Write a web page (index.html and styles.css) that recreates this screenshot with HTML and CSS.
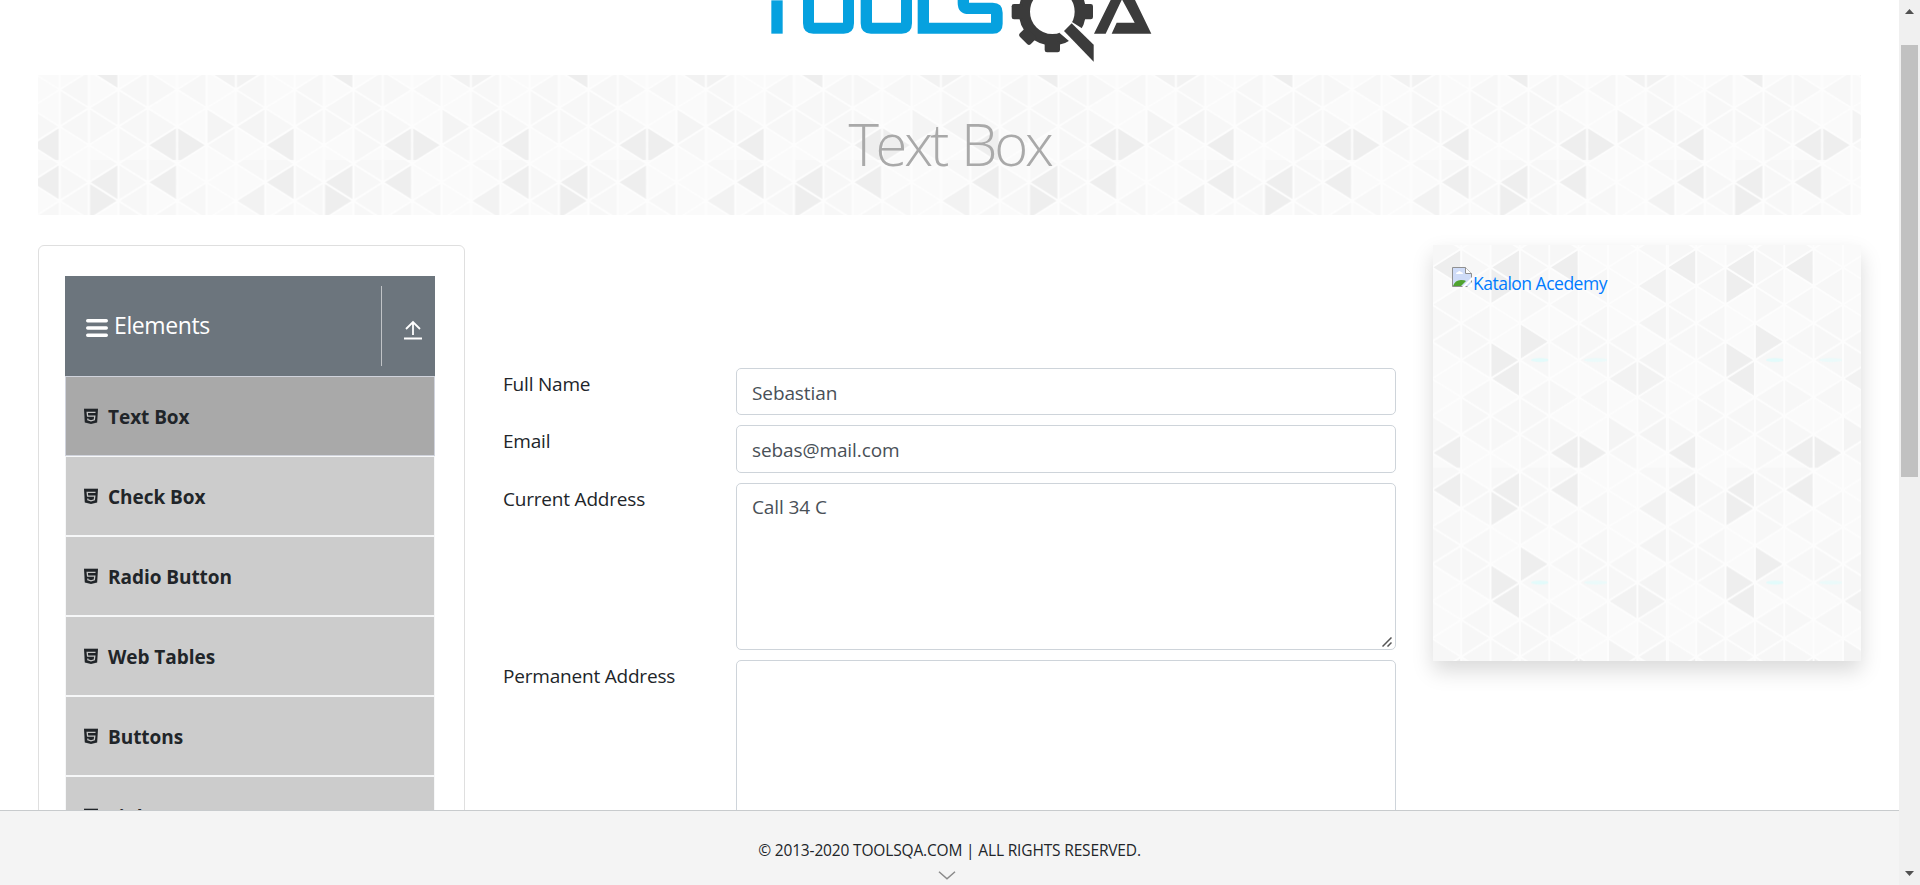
FILE: index.html
```html
<!DOCTYPE html>
<html lang="en">
<head>
<meta charset="utf-8">
<title>ToolsQA</title>
<link rel="stylesheet" href="styles.css">
</head>
<body>
<svg class="defs" width="0" height="0" aria-hidden="true">
  <defs>
    <polygon id="l" points="0,0 29.4,-18.5 29.4,18.5"/>
    <polygon id="r" points="29.4,0 0,-18.5 0,18.5"/>
    <g id="tile">
      <rect width="235" height="222.6" fill="#fafafa"/>
      <g fill="#f7f7f7">
        <use href="#r" x="-1.2" y="189.3"/><use href="#l" x="28.2" y="189.3"/><use href="#r" x="57.5" y="189.3"/><use href="#l" x="86.9" y="189.3"/><use href="#r" x="116.3" y="189.3"/>
        <use href="#l" x="28.2" y="115.1"/><use href="#r" x="57.5" y="115.1"/><use href="#l" x="86.9" y="115.1"/><use href="#l" x="145.6" y="115.1"/><use href="#r" x="175" y="115.1"/>
        <use href="#l" x="28.2" y="152.2"/><use href="#l" x="86.9" y="152.2"/><use href="#r" x="116.3" y="152.2"/><use href="#l" x="145.6" y="152.2"/><use href="#l" x="204.4" y="152.2"/>
        <use href="#r" x="28.2" y="170.7"/><use href="#l" x="57.5" y="170.7"/><use href="#r" x="86.9" y="170.7"/><use href="#r" x="204.4" y="170.7"/>
        <use href="#r" x="86.9" y="207.8"/><use href="#l" x="175" y="207.8"/>
        <use href="#r" x="-1.2" y="3.8"/><use href="#r" x="57.5" y="3.8"/><use href="#l" x="86.9" y="3.8"/><use href="#r" x="116.3" y="3.8"/><use href="#l" x="204.4" y="3.8"/>
        <use href="#r" x="28.2" y="22.3"/><use href="#r" x="86.9" y="22.3"/><use href="#l" x="28.2" y="40.9"/><use href="#l" x="86.9" y="40.9"/><use href="#l" x="145.6" y="40.9"/>
        <use href="#l" x="-1.2" y="59.4"/><use href="#r" x="86.9" y="59.4"/><use href="#l" x="116.3" y="59.4"/>
        <use href="#l" x="28.2" y="78"/><use href="#r" x="-1.2" y="78"/><use href="#l" x="145.6" y="78"/>
        <use href="#l" x="-1.2" y="96.6"/><use href="#r" x="28.2" y="96.6"/><use href="#l" x="116.3" y="96.6"/><use href="#r" x="145.6" y="96.6"/><use href="#l" x="175" y="96.6"/>
      </g>
      <g fill="#f4f4f4">
        <use href="#l" x="204.4" y="78"/><use href="#l" x="204.4" y="115.1"/><use href="#r" x="175" y="189.3"/><use href="#l" x="204.4" y="189.3"/>
      </g>
      <g fill="#f2f2f2">
        <use href="#l" x="204.4" y="40.9"/><use href="#l" x="175" y="133.6"/><use href="#r" x="204.4" y="133.6"/>
      </g>
      <g fill="#eeeeee">
        <use href="#l" x="-1.2" y="22.3"/><use href="#l" x="57.5" y="22.3"/><use href="#r" x="57.5" y="40.9"/><use href="#l" x="116.3" y="22.3"/>
        <use href="#r" x="86.9" y="96.6"/><use href="#r" x="57.5" y="115.1"/><use href="#l" x="57.5" y="133.6"/>
        <use href="#l" x="-1.2" y="207.8"/><use href="#l" x="116.3" y="207.8"/><use href="#r" x="145.6" y="207.8"/>
      </g>
      <g fill="#e2fbfb"><ellipse cx="107" cy="115" rx="9" ry="2"/><ellipse cx="163" cy="115" rx="12" ry="2" opacity=".6"/></g>
      <path fill="none" stroke="#fdfdfd" stroke-width="2" d="M-1.2 0v223M28.2 0v223M57.5 0v223M86.9 0v223M116.3 0v223M145.6 0v223M175 0v223M204.4 0v223M233.8 0v223
        M-30.6-181.7l293.7 185.5M-30.6-144.6l293.7 185.5M-30.6-107.5l293.7 185.5M-30.6-70.4l293.7 185.5M-30.6-33.3l293.7 185.5M-30.6 3.8l293.7 185.5M-30.6 40.9l293.7 185.5M-30.6 78l293.7 185.5M-30.6 115.1l293.7 185.5M-30.6 152.2l293.7 185.5M-30.6 189.3l293.7 185.5
        M-30.6 3.8l293.7-185.5M-30.6 40.9l293.7-185.5M-30.6 78l293.7-185.5M-30.6 115.1l293.7-185.5M-30.6 152.2l293.7-185.5M-30.6 189.3l293.7-185.5M-30.6 226.4l293.7-185.5M-30.6 263.5l293.7-185.5M-30.6 300.6l293.7-185.5M-30.6 337.7l293.7-185.5M-30.6 374.8l293.7-185.5"/>
    </g>
    <pattern id="tri-card" width="235" height="222.6" patternUnits="userSpaceOnUse"><use href="#tile"/></pattern>
    <pattern id="tri-banner" x="-6.5" y="-137.7" width="235" height="222.6" patternUnits="userSpaceOnUse"><use href="#tile"/></pattern>
    <symbol id="html5" viewBox="0 0 14 16">
      <path fill="#212529" fill-opacity=".3" d="M0 0h14v1H0z"/>
      <path fill="#212529" d="M0 1h14l-.8 13.400L7 16 .8 14.400z"/>
      <path fill="none" stroke="#c4c4c4" stroke-width="1.300" d="M11.500 4.300H3.200l.4 3.800h7.200l-.5 3.700L7 12.900l-3.100-1.100-.1-1.300"/>
    </symbol>
  </defs>
</svg>
<div class="page">
  <main class="content">
    <header class="brand">
      <svg class="logo" viewBox="0 0 1320 210">
        <g fill="#06a1df">
          <path d="M94 1h34v100H94z"/>
          <path fill-rule="evenodd" d="M189 0H342V70Q342 101 311 101H220Q189 101 189 70zM222 0V68H309V0z"/>
          <path fill-rule="evenodd" d="M362 0H516V70Q516 101 485 101H393Q362 101 362 70zM396 0V68H483V0z"/>
          <path d="M533 0H567V68H753V42H687Q653 42 653 8V0H687V8H758Q788 8 788 38V71Q788 101 758 101H533z"/>
        </g>
        <g fill="#3b3b3b">
          <circle cx="937" cy="35" r="84" fill="none" stroke="#3b3b3b" stroke-width="34"/>
          <rect x="914" y="123" width="46" height="34" rx="7" transform="rotate(0 937 35)"/>
          <rect x="914" y="123" width="46" height="34" rx="7" transform="rotate(45 937 35)"/>
          <rect x="914" y="123" width="46" height="34" rx="7" transform="rotate(90 937 35)"/>
          <rect x="914" y="123" width="46" height="34" rx="7" transform="rotate(-90 937 35)"/>
          <path fill="#fff" d="M958 98L990 62L1028 86L1070 130V200H1040L986 122z"/>
          <path d="M972 93L995 70L1061 134V185z"/>
          <path d="M1062 101L1112 0H1145L1097 101zM1147 0H1185L1234 101H1115L1130 68H1184z"/>
        </g>
      </svg>
    </header>
    <section class="banner">
      <svg class="texture" width="100%" height="100%"><rect width="100%" height="100%" fill="url(#tri-banner)"/></svg>
      <h1 class="banner-title">Text Box</h1>
    </section>
    <div class="columns">
      <aside class="sidebar">
        <div class="group-header">
          <svg class="bars" viewBox="0 0 22 20"><path stroke="#fff" stroke-width="3.400" stroke-linecap="round" d="M1.700 2.700h18.600M1.700 10h18.600M1.700 17.300h18.600"/></svg>
          <span class="group-title">Elements</span>
          <span class="group-toggle"><svg width="18" height="20" viewBox="0 0 18 20"><path fill="none" stroke="#fff" stroke-width="1.800" d="M9 15V2M2 9l7-7 7 7M0 18.500h18"/></svg></span>
        </div>
        <ul class="menu">
          <li class="item active"><svg class="tag"><use href="#html5"/></svg><span class="item-text">Text Box</span></li>
          <li class="item"><svg class="tag"><use href="#html5"/></svg><span class="item-text">Check Box</span></li>
          <li class="item"><svg class="tag"><use href="#html5"/></svg><span class="item-text">Radio Button</span></li>
          <li class="item"><svg class="tag"><use href="#html5"/></svg><span class="item-text">Web Tables</span></li>
          <li class="item"><svg class="tag"><use href="#html5"/></svg><span class="item-text">Buttons</span></li>
          <li class="item"><svg class="tag"><use href="#html5"/></svg><span class="item-text">Links</span></li>
        </ul>
      </aside>
      <form class="form">
        <label class="label" for="name">Full Name</label><input class="field" id="name" value="Sebastian">
        <label class="label" for="email">Email</label><input class="field tall" id="email" value="sebas@mail.com">
        <label class="label" for="current">Current Address</label>
        <div class="area-wrap">
          <textarea class="field area" id="current">Call 34 C</textarea>
          <svg class="grip" width="10" height="10" viewBox="0 0 10 10"><path stroke="#555" stroke-width="1.500" d="M.5 9.500l9-9M5.500 9.500l4-4"/></svg>
        </div>
        <label class="label" for="permanent">Permanent Address</label><textarea class="field area" id="permanent"></textarea>
      </form>
      <aside class="promo">
        <svg class="texture" width="100%" height="100%"><rect width="100%" height="100%" fill="url(#tri-card)"/></svg>
        <a class="promo-link">
          <svg width="20" height="20" viewBox="0 0 20 20">
            <path fill="#cfdcf8" stroke="#909090" d="M.5.5h13l6 6v13H.5z"/>
            <path fill="#fff" d="M4 7q0-2 2-2 1-2 3 0 2 0 2 2zM13.500.5v6h6z"/>
            <path fill="none" stroke="#909090" d="M13.500.5v6h6"/>
            <path fill="#4fa32f" d="M1 19q2-6 8-6 4 0 5 1l-5 5z"/>
            <path fill="#fff" d="M10 20L20 10v3l-7 7zM15 20l5-5v5z"/>
          </svg><span class="promo-text">Katalon Acedemy</span>
        </a>
      </aside>
    </div>
  </main>
  <footer class="footer">
    <span class="copyright">© 2013-2020 TOOLSQA.COM | ALL RIGHTS RESERVED.</span>
    <svg class="chevron" width="18" height="9" viewBox="0 0 18 9"><path fill="none" stroke="#8a8a8a" stroke-width="1.500" d="M1 .8l8 7 8-7"/></svg>
  </footer>
</div>
<div class="scrollbar">
  <svg class="up" width="9" height="5" viewBox="0 0 9 5"><path fill="#505050" d="M4.500 0L9 5H0z"/></svg>
  <div class="thumb"></div>
  <svg class="down" width="9" height="5" viewBox="0 0 9 5"><path fill="#505050" d="M4.500 5L9 0H0z"/></svg>
</div>
</body>
</html>
```
FILE: styles.css
```css
* { box-sizing: border-box; }
body {
  margin: 0;
  height: 885px;
  display: flex;
  overflow: hidden;
  background: #fff;
  color: #212529;
  font: 19px/30px "Open Sans", "Noto Sans", sans-serif;
}
.defs { position: absolute; }
.page { width: 1899px; height: 885px; display: flex; flex-direction: column; }
.content { height: 810px; overflow: hidden; padding: 0 38px; }
.brand { height: 75px; padding-left: 702px; }
.logo { display: block; width: 440px; height: 70px; }
.banner { position: relative; height: 140px; display: flex; justify-content: center; }
.texture { position: absolute; inset: 0; }
.banner-title {
  position: relative;
  margin: 0;
  padding-top: 34px;
  font-size: 58px;
  line-height: 70px;
  font-weight: 300;
  color: #a9a9a9;
  letter-spacing: -3.2px;
  word-spacing: 3px;
}
.columns { display: flex; align-items: flex-start; margin-top: 30px; }
.sidebar {
  width: 427px;
  height: 700px;
  padding: 30px 29px 0 26px;
  border: 1px solid #dfdfdf;
  border-radius: 6px;
}
.group-header {
  height: 100px;
  padding: 10px 0 10px 21px;
  display: flex;
  align-items: center;
  background: #6c757d;
  color: #fff;
}
.bars { width: 22px; height: 20px; margin-top: 4px; }
.group-title { margin-left: 6px; padding-bottom: 2px; font-size: 23px; letter-spacing: -.4px; }
.group-toggle {
  width: 54px;
  height: 80px;
  margin-left: auto;
  padding: 34px 0 0 22px;
  border-left: 1px solid #c0c3c6;
  line-height: 0;
}
.menu { list-style: none; margin: 0; padding: 0; }
.item {
  height: 80px;
  padding-left: 18px;
  display: flex;
  align-items: center;
  border: 1px solid #f6f7f8;
  background: #ccc;
  font-weight: 700;
  letter-spacing: -.05px;
}
.item.active { background: #a9a9a9; border-color: #d0d3dc; }
.item-text { padding-top: 2px; }
.tag { width: 14px; height: 16px; margin-right: 10px; }
.form {
  width: 893px;
  margin-left: 38px;
  padding-top: 123px;
  display: grid;
  grid-template-columns: 233px 660px;
  row-gap: 10px;
  align-items: start;
}
.label { padding-top: 1px; letter-spacing: -.2px; }
.field {
  display: block;
  width: 660px;
  height: 47px;
  margin: 0;
  padding: 9px 15px 7px;
  border: 1px solid #ced4da;
  border-radius: 5px;
  background: #fff;
  color: #495057;
  font: inherit;
  letter-spacing: -.1px;
}
.tall { height: 48px; }
.area { height: 167px; padding-top: 8px; overflow: hidden; resize: none; }
.area-wrap { position: relative; }
.grip { position: absolute; right: 4px; bottom: 3px; }
.promo {
  position: relative;
  width: 428px;
  height: 416px;
  margin-left: 37px;
  padding: 22px 19px;
  box-shadow: 0 10px 20px rgba(0, 0, 0, .15);
}
.promo-link { position: relative; display: flex; color: #007bff; font-size: 17.500px; line-height: 30px; }
.promo-text { margin-left: 1px; padding-top: 1px; letter-spacing: -.5px; }
.footer {
  height: 75px;
  padding-top: 24px;
  display: flex;
  flex-direction: column;
  align-items: center;
  border-top: 1px solid #c8cbcd;
  background: #f4f4f4;
  font-size: 15.500px;
}
.copyright { white-space: nowrap; letter-spacing: -.16px; }
.chevron { margin: 6px 5px 0 0; }
.scrollbar {
  width: 21px;
  height: 885px;
  padding: 9px 2px;
  display: flex;
  flex-direction: column;
  align-items: center;
  background: #f0f0f0;
}
.thumb { width: 17px; height: 432px; margin-top: 31px; background: #c1c1c1; }
.down { margin-top: auto; }
```
